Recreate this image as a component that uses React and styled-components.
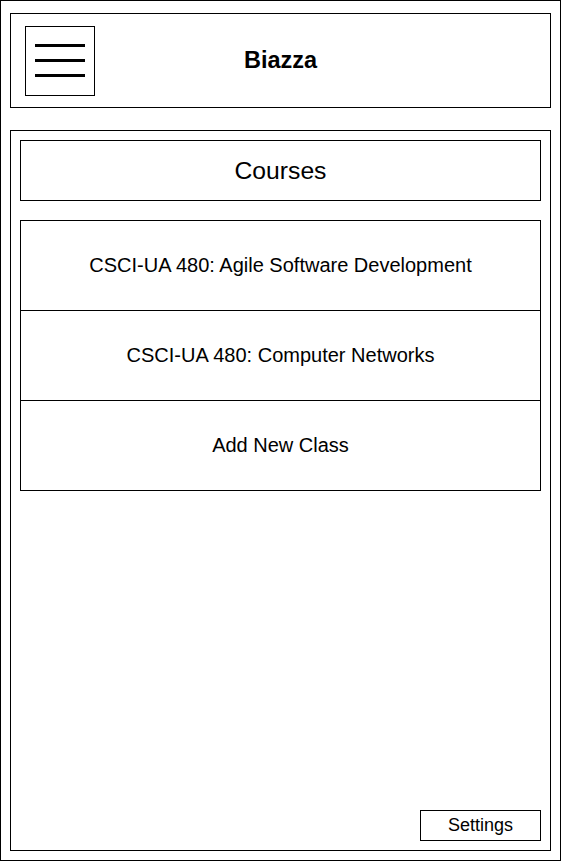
import React from "react";
import styled, { createGlobalStyle } from "styled-components";

const GlobalStyle = createGlobalStyle`
    html, body {
        margin: 0;
        padding: 0;
        background: #fff;
    }

    body {
        font-family: "Liberation Sans", Arial, Helvetica, sans-serif;
        color: #000;
    }

    * {
        box-sizing: border-box;
    }
`;

const Frame = styled.div`
    display: flex;
    flex-direction: column;
    gap: 22px;
    width: 561px;
    height: 861px;
    border: 1px solid #000;
    padding: 12px 9px 9px 9px;
`;

const Header = styled.header`
    display: grid;
    grid-template-columns: 1fr auto 1fr;
    align-items: center;
    height: 95px;
    border: 1px solid #000;
    padding: 0 14px;
`;

const MenuButton = styled.button`
    display: flex;
    flex-direction: column;
    justify-content: center;
    align-items: center;
    gap: 12px;
    width: 70px;
    height: 70px;
    padding: 0;
    background: #fff;
    border: 1px solid #000;
    cursor: pointer;

    span {
        display: block;
        width: 50px;
        height: 3px;
        background: #000;
    }
`;

const Title = styled.h1`
    margin: 0;
    font-size: 23.5px;
    font-weight: bold;
`;

const Main = styled.main`
    display: flex;
    flex-direction: column;
    flex: 1;
    border: 1px solid #000;
    padding: 9px 9px 9px 9px;
`;

const SectionTitle = styled.h2`
    display: flex;
    justify-content: center;
    align-items: center;
    height: 61px;
    margin: 0 0 19px 0;
    border: 1px solid #000;
    font-size: 24.7px;
    font-weight: normal;
`;

const CourseList = styled.ul`
    list-style: none;
    margin: 0;
    padding: 0;
    border: 1px solid #000;
`;

const CourseItem = styled.li`
    display: flex;
    justify-content: center;
    align-items: center;
    height: ${({ $last }) => ($last ? "89px" : "90px")};
    border-bottom: ${({ $last }) => ($last ? "none" : "1px solid #000")};
    font-size: 20px;
    cursor: pointer;
`;

const Footer = styled.div`
    display: flex;
    justify-content: flex-end;
    margin-top: auto;
`;

const SettingsButton = styled.button`
    width: 121px;
    height: 31px;
    padding: 0;
    background: #fff;
    border: 1px solid #000;
    font-family: inherit;
    font-size: 18px;
    color: #000;
    cursor: pointer;
`;

const courses = [
    "CSCI-UA 480: Agile Software Development",
    "CSCI-UA 480: Computer Networks",
    "Add New Class",
];

const App = () => {
    return (
        <>
            <GlobalStyle />
            <Frame>
                <Header>
                    <MenuButton aria-label="Menu">
                        <span />
                        <span />
                        <span />
                    </MenuButton>
                    <Title>Biazza</Title>
                </Header>
                <Main>
                    <SectionTitle>Courses</SectionTitle>
                    <CourseList>
                        {courses.map((c, index) => (
                            <CourseItem key={index} $last={index === courses.length - 1}>
                                {c}
                            </CourseItem>
                        ))}
                    </CourseList>
                    <Footer>
                        <SettingsButton>Settings</SettingsButton>
                    </Footer>
                </Main>
            </Frame>
        </>
    );
};

export default App;
